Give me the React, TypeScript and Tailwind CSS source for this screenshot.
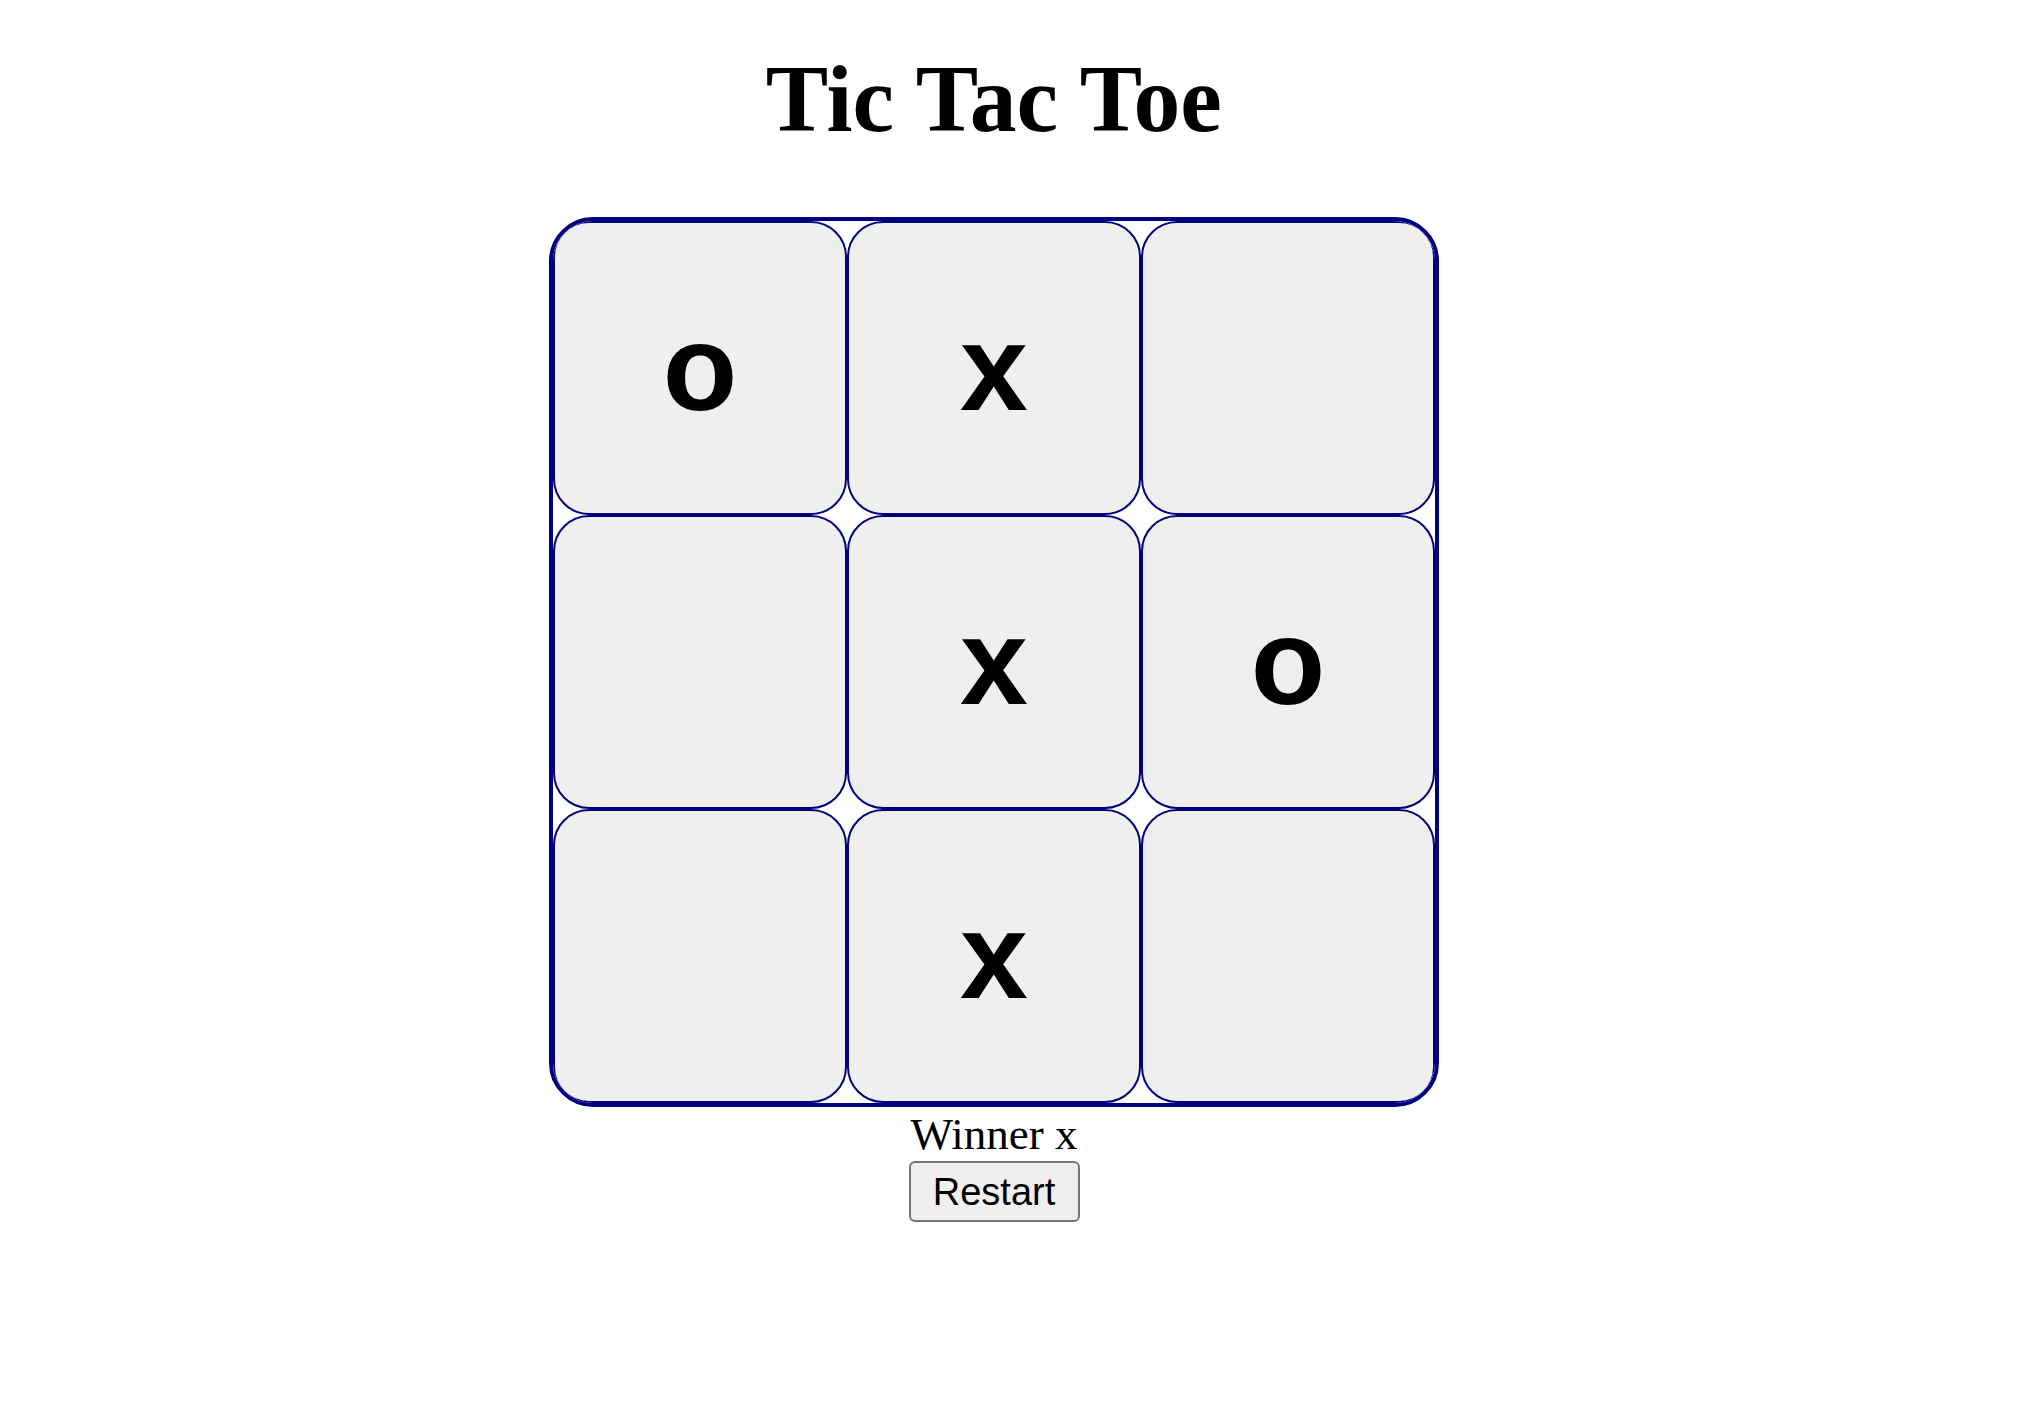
import { useState } from "react";

type Mark = "x" | "o" | "";

const INITIAL: Mark[] = ["o", "x", "", "", "x", "o", "", "x", ""];

const LINES = [
  [0, 1, 2], [3, 4, 5], [6, 7, 8],
  [0, 3, 6], [1, 4, 7], [2, 5, 8],
  [0, 4, 8], [2, 4, 6],
];

function getWinner(cells: Mark[]): Mark {
  for (const [a, b, c] of LINES) {
    if (cells[a] && cells[a] === cells[b] && cells[a] === cells[c]) return cells[a];
  }
  return "";
}

function Cell({ value, onClick }: { value: Mark; onClick: () => void }) {
  return (
    <div
      onClick={onClick}
      className="flex items-center justify-center h-[294px] bg-[#efefef] border-[2.5px] border-[#000080] rounded-[36px] text-[122px] font-bold text-black cursor-pointer select-none"
      style={{ fontFamily: '"Liberation Sans", Arial, sans-serif' }}
    >
      {value}
    </div>
  );
}

export default function App() {
  const [cells, setCells] = useState<Mark[]>(INITIAL);
  const [turn, setTurn] = useState<Mark>("o");
  const winner = getWinner(cells);

  const play = (i: number) => {
    if (winner || cells[i]) return;
    const next = [...cells];
    next[i] = turn;
    setCells(next);
    setTurn(turn === "x" ? "o" : "x");
  };

  const restart = () => {
    setCells(Array(9).fill("") as Mark[]);
    setTurn("x");
  };

  return (
    <div className="min-h-screen bg-white">
      <div
        className="w-[1988px] flex flex-col items-center text-black"
        style={{ fontFamily: '"Liberation Serif", "Times New Roman", serif' }}
      >
        <h1 className="pt-[44px] text-[96px] leading-[110px] font-bold scale-x-[0.975]">
          Tic Tac Toe
        </h1>

        {/* Board */}
        <div className="mt-[63px] w-[890px] grid grid-cols-3 border-[4px] border-[#000080] rounded-[44px] overflow-hidden">
          {cells.map((v, i) => (
            <Cell key={i} value={v} onClick={() => play(i)} />
          ))}
        </div>

        <p className="mt-[1px] text-[45px] leading-[52px]">
          {winner ? `Winner ${winner}` : `Turn ${turn}`}
        </p>

        <button
          onClick={restart}
          className="w-[171px] h-[61px] mt-[1px] flex items-center justify-center bg-[#efefef] border-2 border-[#767676] rounded-[6px] text-[38px] leading-none text-black"
          style={{ fontFamily: '"Liberation Sans", Arial, sans-serif' }}
        >
          Restart
        </button>
      </div>
    </div>
  );
}
